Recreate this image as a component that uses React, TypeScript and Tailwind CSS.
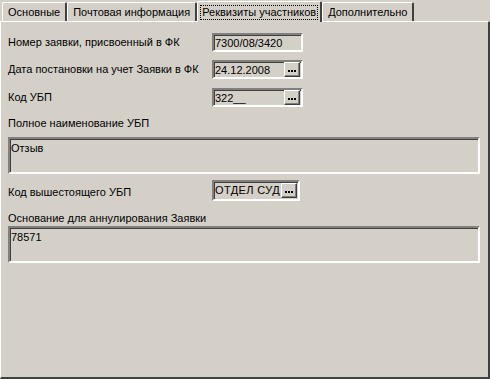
const sunken =
  'border-2 border-t-[#808080] border-l-[#808080] border-b-white border-r-white shadow-[inset_1px_1px_0_#404040,inset_-1px_-1px_0_#d4d0c8]'

function DotsButton() {
  return (
    <div className="shrink-0 w-[16px] h-[15px] bg-[#d4d0c8] border border-t-white border-l-white border-b-[#404040] border-r-[#404040] shadow-[inset_-1px_-1px_0_#808080] flex items-center justify-center gap-[1px] pt-[3px]">
      <span className="w-[2px] h-[2px] bg-black" />
      <span className="w-[2px] h-[2px] bg-black" />
      <span className="w-[2px] h-[2px] bg-black" />
    </div>
  )
}

function Field({ value, button }: { value: string; button?: boolean }) {
  return (
    <div className={`${sunken} w-[91px] h-[19px] bg-[#d4d0c8] flex items-center pl-[1px] pr-[1px]`}>
      <span className="flex-1 min-w-0 text-[11px] leading-[14px] text-black whitespace-nowrap overflow-hidden">{value}</span>
      {button && <DotsButton />}
    </div>
  )
}

const TABS = ['Основные', 'Почтовая информация', 'Реквизиты участников', 'Дополнительно']

export default function App() {
  return (
    <div className="w-[490px] h-[379px] bg-[#d4d0c8] flex flex-col text-black text-[11px]" style={{ fontFamily: '"Liberation Sans", Arial, sans-serif' }}>
      <div className="h-[21px] flex items-end pl-[2px]">
        {TABS.map((t, i) =>
          i === 2 ? (
            <div key={t} className="h-[21px] -mb-[1px] relative z-10 px-[2px] pt-[3px] bg-[#d4d0c8] border-t border-l border-white border-r-2 border-r-[#404040] rounded-t-[2px] whitespace-nowrap">
              <div className="border border-dotted border-black px-[1px] leading-[13px]">{t}</div>
            </div>
          ) : (
            <div key={t} className="h-[19px] px-[5px] pt-[3px] leading-[13px] bg-[#d4d0c8] border-t border-l border-white border-r-2 border-r-[#404040] rounded-t-[2px] whitespace-nowrap">
              {t}
            </div>
          )
        )}
      </div>
      <div className="flex-1 border-t border-l border-t-white border-l-white border-r-2 border-b-2 border-r-[#404040] border-b-[#404040] px-[7px] pt-[11px]">
        <div className="flex items-center h-[19px]">
          <div className="w-[204px] whitespace-nowrap">Номер заявки, присвоенный в ФК</div>
          <Field value="7300/08/3420" />
        </div>
        <div className="flex items-center h-[19px] mt-[8px]">
          <div className="w-[204px] whitespace-nowrap">Дата постановки на учет Заявки в ФК</div>
          <Field value="24.12.2008" button />
        </div>
        <div className="flex items-center h-[19px] mt-[9px]">
          <div className="w-[204px] whitespace-nowrap">Код УБП</div>
          <Field value="322__" button />
        </div>
        <div className="mt-[9px] leading-[14px]">Полное наименование УБП</div>
        <div className={`${sunken} mt-[7px] h-[37px] mr-[1px] px-[1px] pt-[2px] leading-[14px]`}>Отзыв</div>
        <div className="flex items-end h-[21px] mt-[6px]">
          <div className="w-[204px] pb-[1px] whitespace-nowrap">Код вышестоящего УБП</div>
          <div className={`${sunken} w-[88px] h-[21px] flex items-center pl-[1px] pr-[1px]`}>
            <span className="flex-1 min-w-0 text-[11px] leading-[15px] tracking-[0.4px] whitespace-nowrap overflow-hidden">ОТДЕЛ СУД</span>
            <DotsButton />
          </div>
        </div>
        <div className="mt-[10px] leading-[14px]">Основание для аннулирования Заявки</div>
        <div className={`${sunken} mt-[1px] h-[37px] mr-[1px] px-[1px] pt-[2px] leading-[14px]`}>78571</div>
      </div>
    </div>
  )
}
